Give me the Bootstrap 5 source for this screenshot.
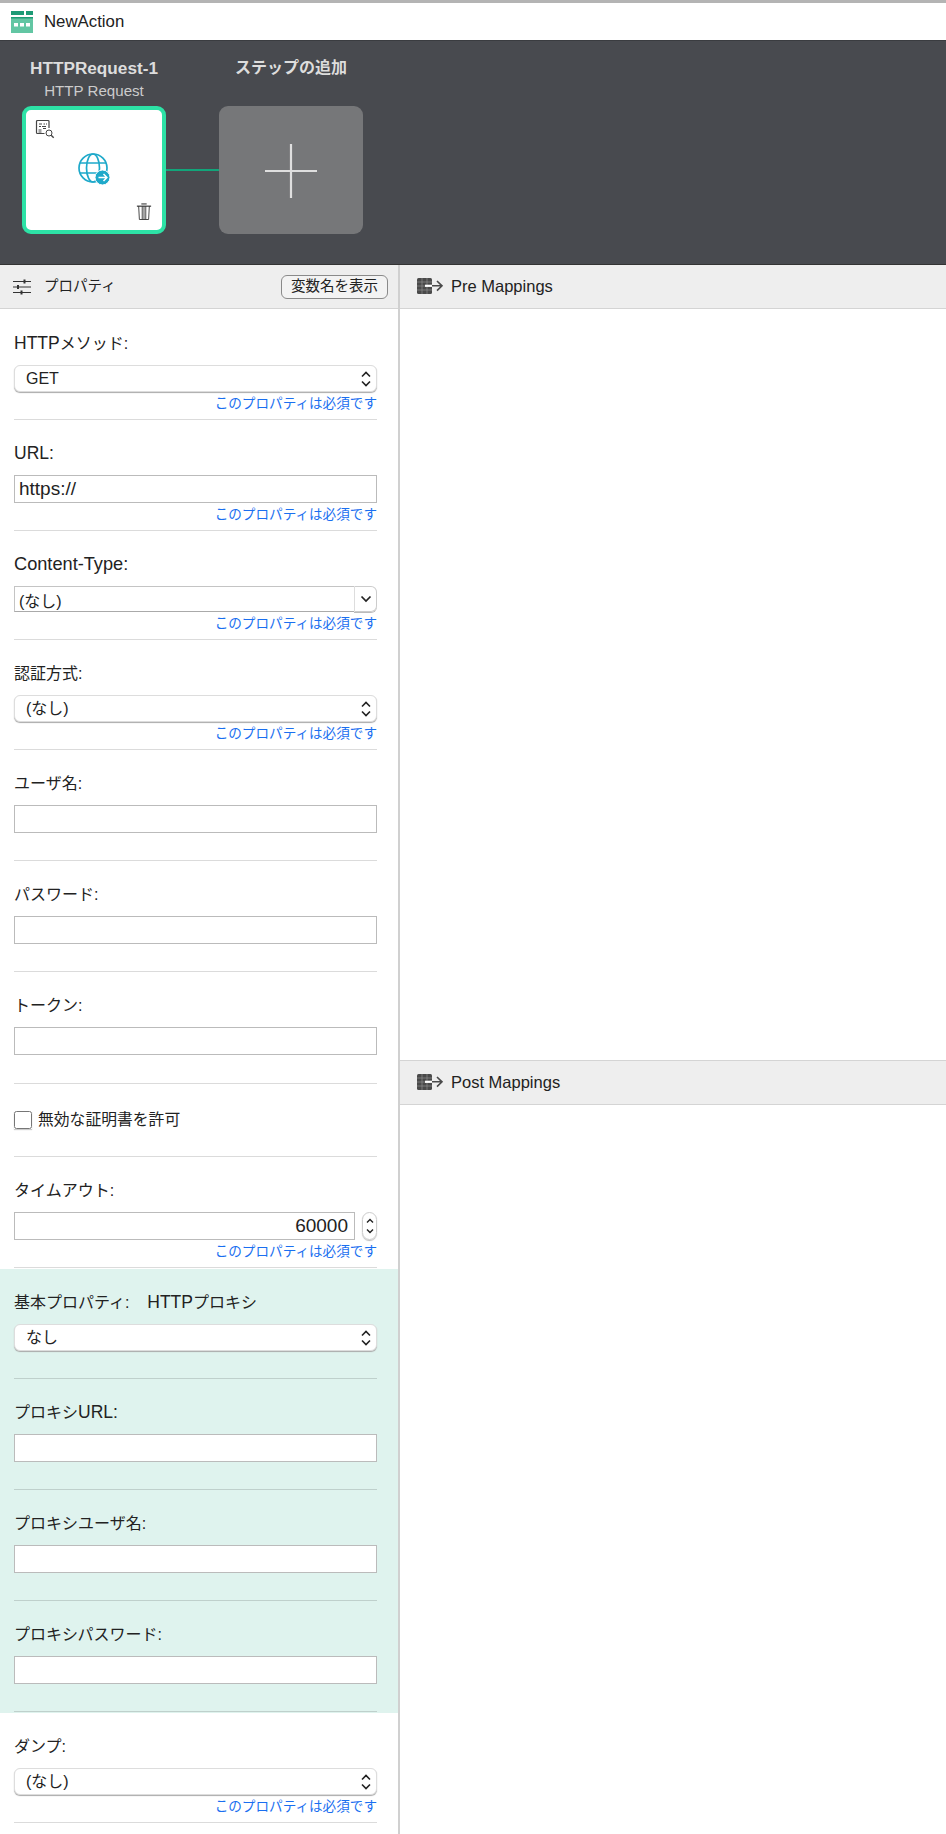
<!DOCTYPE html>
<html lang="ja">
<head>
<meta charset="utf-8">
<title>NewAction</title>
<link href="https://cdn.jsdelivr.net/npm/bootstrap@5.3.0/dist/css/bootstrap.min.css" rel="stylesheet">
<style>
html,body{height:1834px;overflow:hidden}
body{font-family:"Liberation Sans","Noto Sans CJK JP",sans-serif;font-size:16px;color:#222;background:#fff}
.topline{height:3px;background:#b4b4b4}
.titlebar{height:37px;padding-left:11px;gap:11px;font-size:16.8px}
.stage{height:225px;background:#484a4f;padding:0 0 0 22px;border-top:1px solid #3a3c40;border-bottom:1px solid #333}
.stepcol{width:144px}
.steptitle{height:65px;padding-top:16px;text-align:center;color:#ddd;line-height:1.2}
.steptitle b{display:block;font-size:17.2px;font-weight:700;line-height:22px}
.steptitle b.jp{font-size:16px}
.steptitle span{display:block;font-size:15.1px;color:#ccc;line-height:23px}
.stepcard{height:128px;border:4px solid #2de2a6;border-radius:9px;background:#fff;position:relative}
.stepadd{height:128px;border-radius:9px;background:#767779;padding-top:1px}
.link{width:53px;height:2px;background:#12a57a;margin-top:128px}
.ic-a{position:absolute;left:9px;top:9px}
.ic-b{position:absolute;left:52px;top:43px}
.ic-c{position:absolute;right:10px;bottom:9px}
.main{height:1569px}
.leftcol{width:400px;border-right:2px solid #d0d0d0;flex:none}
.panelhead{height:44px;background:#eee;border-bottom:1px solid #d4d4d4;font-size:14.5px}
.lefthead{padding:0 10px 0 13px}
.headgroup{gap:13px}
.righthead{padding:0 0 0 17px;gap:7px;font-size:16.5px}
.btn.varbtn{height:24px;padding:0 9px;font-size:14.5px;line-height:21px;color:#222;background:#f3f3f3;border:1px solid #8a8a8a;border-radius:6px}
.pf{margin:0 21px 0 14px;padding-top:22px;border-bottom:1px solid rgba(0,0,0,.14)}
.pf.firstpf{padding-top:23px}
.pf.extra{padding-bottom:1px}
.pf .flabel{display:block;height:24px;line-height:24px;margin-bottom:9px;font-size:16px;overflow:hidden}
.latin{font-size:17.5px;line-height:1}
.latinwide{font-size:18.2px;line-height:1}
.pf .form-select,.pf .form-control,.pf .combotxt{font-size:16px;color:#222;border-radius:0;box-shadow:none}
.pf .form-select{height:27px;padding:0 24px 0 11px;border:1px solid #ddd;border-radius:6px;background-color:#fff;box-shadow:0 1px 1px #aaa;background-size:12px 18px;background-position:right 4px center;background-image:url("data:image/svg+xml,%3Csvg xmlns='http://www.w3.org/2000/svg' viewBox='0 0 12 18'%3E%3Cpath d='M2 6.500 6 2.500l4 4M2 11.500l4 4 4-4' fill='none' stroke='%23222' stroke-width='1.600'/%3E%3C/svg%3E")}
.pf .form-control{height:28px;padding:0 6px 0 4px;font-size:19px;border:1px solid #bbb}
.pf .combotxt{height:26px;padding:0 4px;border:1px solid #c4c4c4;border-bottom-color:#aaa;border-right:0;line-height:30px;overflow:hidden;background:#fff;flex:1}
.combobtn{width:23px;height:26px;border:1px solid #ccc;border-left-color:#ddd;border-radius:0 6px 6px 0;box-shadow:0 1px 0 #bbb}
.hintrow{height:18px;margin-top:3px;margin-bottom:6px;font-size:13.6px;line-height:18px;text-align:right;color:#1a6ff0}
.spin{width:15px;height:28px;border:1px solid #ccc;border-radius:8px;box-shadow:0 1px 1px #bbb;margin-left:7px;flex:none}
.checkrow{height:73px;margin:0 21px 0 14px;gap:6px;font-size:15.8px;border-bottom:1px solid rgba(0,0,0,.14)}
.checkbox-x{width:18px;height:18px;margin:0;border:1px solid #c4c4c4;border-radius:4px;box-shadow:0 1px 1px #ccc}
.proxy{background:#dff3ee;margin-top:1px;padding-bottom:1px}
.mapbody{height:751px}
.posthead{border-top:1px solid #d4d4d4;height:45px}
</style>
</head>
<body>
<svg width="0" height="0" class="position-absolute">
<defs>
<symbol id="matrix" viewBox="0 0 27 17">
<rect x="0" y="0" width="15" height="16" rx="1.500" fill="#4a4a4a"/>
<path d="M5 0v16M10 0v16M0 4h15M0 8h15M0 12h15" stroke="#999" stroke-width=".6"/>
<rect x="8" y="6.700" width="7" height="2.200" fill="#fff"/>
<path d="M15 7.800h10M20 3l5 4.800-5 4.800" fill="none" stroke="#4a4a4a" stroke-width="1.600"/>
</symbol>
</defs>
</svg>
<div class="topline"></div>
<div class="titlebar d-flex align-items-center bg-white">
<svg width="22" height="22" viewBox="0 0 22 22"><rect x="0" y="0" width="13" height="4" fill="#1c9a75"/><rect x="15" y="0" width="7" height="4" fill="#1c9a75"/><rect x="0" y="6" width="22" height="16" fill="#62c6a3"/><rect x="0" y="6" width="22" height="1.500" fill="#1c9a75"/><rect x="3" y="12" width="4" height="3.500" fill="#fff"/><rect x="9" y="12" width="4" height="3.500" fill="#fff"/><rect x="15" y="12" width="4" height="3.500" fill="#fff"/></svg>
<span>NewAction</span>
</div>
<div class="stage d-flex align-items-start">
<div class="stepcol">
<div class="steptitle"><b>HTTPRequest-1</b><span>HTTP Request</span></div>
<div class="stepcard">
<svg class="ic-a" width="20" height="20" viewBox="0 0 20 20" fill="none" stroke="#444" stroke-width="1"><path d="M14 9V2.500a1 1 0 0 0-1-1H2.500a1 1 0 0 0-1 1v11a1 1 0 0 0 1 1H9.500" stroke-width="1.200"/><path d="M4 5h3M8.500 5h1.500M11 5h1M4 7.500h2M7 7.500h4M3.500 11h3M3.500 13h3M8 9.500h3"/><circle cx="14" cy="14" r="3"/><path d="M16.200 16.200l2.500 2.500" stroke-width="1.400"/></svg>
<svg class="ic-b" width="34" height="34" viewBox="0 0 34 34" fill="none" stroke="#1ea9ca" stroke-width="1.700"><circle cx="15" cy="15" r="14"/><ellipse cx="15" cy="15" rx="6.500" ry="14"/><path d="M2 10h26M2 20h26"/><circle cx="24.500" cy="24.500" r="7.500" fill="#1ea9ca" stroke="#fff" stroke-width="1"/><path d="M20.500 24.500h8M25.500 21l3.400 3.500-3.400 3.500" stroke="#fff" stroke-width="1.500"/></svg>
<svg class="ic-c" width="16" height="19" viewBox="0 0 18 20" fill="none" stroke="#333" stroke-width="1"><path d="M1 4h16" stroke-width="1.300"/><path d="M6 1.500h6" stroke-width="1.200"/><path d="M3 4l.8 15h10.400L15 4M7 4v15M9 4v15M11 4v15"/></svg>
</div>
</div>
<div class="link"></div>
<div class="stepcol">
<div class="steptitle"><b class="jp">ステップの追加</b></div>
<div class="stepadd d-flex align-items-center justify-content-center">
<svg width="52" height="54" viewBox="0 0 52 54"><path d="M26 0v54M0 27h52" stroke="#dfdfdf" stroke-width="2.200"/></svg>
</div>
</div>
</div>
<div class="main d-flex">
<div class="leftcol">
<div class="panelhead lefthead d-flex align-items-center justify-content-between">
<div class="d-flex align-items-center headgroup">
<svg width="18" height="16" viewBox="0 0 18 16" fill="none" stroke="#333" stroke-width="1.200"><path d="M0 2.500h18M0 8h18M0 13.500h18"/><path d="M11.500 .5v4M5 6v4M8.500 11.500v4" stroke-width="2"/></svg>
<span>プロパティ</span>
</div>
<button type="button" class="btn varbtn">変数名を表示</button>
</div>
<div class="pf firstpf"><div class="flabel"><span class="latin">HTTP</span>メソッド:</div><select class="form-select"><option>GET</option></select><div class="hintrow">このプロパティは必須です</div></div>
<div class="pf"><div class="flabel"><span class="latin">URL:</span></div><input class="form-control" value="https://"><div class="hintrow">このプロパティは必須です</div></div>
<div class="pf"><div class="flabel"><span class="latinwide">Content-Type:</span></div><div class="d-flex"><div class="combotxt">(なし)</div><div class="combobtn d-flex align-items-center justify-content-center"><svg width="12" height="8" viewBox="0 0 12 8"><path d="M1.500 1.500 6 6l4.500-4.500" fill="none" stroke="#222" stroke-width="1.700"/></svg></div></div><div class="hintrow">このプロパティは必須です</div></div>
<div class="pf"><div class="flabel">認証方式:</div><select class="form-select"><option>(なし)</option></select><div class="hintrow">このプロパティは必須です</div></div>
<div class="pf"><div class="flabel">ユーザ名:</div><input class="form-control"><div class="hintrow"></div></div>
<div class="pf"><div class="flabel">パスワード:</div><input class="form-control"><div class="hintrow"></div></div>
<div class="pf extra"><div class="flabel">トークン:</div><input class="form-control"><div class="hintrow"></div></div>
<div class="checkrow d-flex align-items-center"><input type="checkbox" class="checkbox-x"><span>無効な証明書を許可</span></div>
<div class="pf"><div class="flabel">タイムアウト:</div><div class="d-flex"><input class="form-control text-end" value="60000"><div class="spin d-flex align-items-center justify-content-center"><svg width="10" height="20" viewBox="0 0 10 20"><path d="M2 6.500 5 3.500l3 3M2 13.500l3 3 3-3" fill="none" stroke="#222" stroke-width="1.400"/></svg></div></div><div class="hintrow">このプロパティは必須です</div></div>
<div class="proxy">
<div class="pf"><div class="flabel">基本プロパティ:&nbsp;&nbsp;&nbsp;&nbsp;<span class="latin">HTTP</span>プロキシ</div><select class="form-select"><option>なし</option></select><div class="hintrow"></div></div>
<div class="pf"><div class="flabel">プロキシ<span class="latin">URL:</span></div><input class="form-control"><div class="hintrow"></div></div>
<div class="pf"><div class="flabel">プロキシユーザ名:</div><input class="form-control"><div class="hintrow"></div></div>
<div class="pf"><div class="flabel">プロキシパスワード:</div><input class="form-control"><div class="hintrow"></div></div>
</div>
<div class="pf"><div class="flabel">ダンプ:</div><select class="form-select"><option>(なし)</option></select><div class="hintrow">このプロパティは必須です</div></div>
</div>
<div class="flex-grow-1">
<div class="panelhead righthead d-flex align-items-center"><svg width="27" height="17"><use href="#matrix"/></svg><span>Pre Mappings</span></div>
<div class="mapbody"></div>
<div class="panelhead posthead righthead d-flex align-items-center"><svg width="27" height="17"><use href="#matrix"/></svg><span>Post Mappings</span></div>
</div>
</div>
<script src="https://cdn.jsdelivr.net/npm/bootstrap@5.3.0/dist/js/bootstrap.bundle.min.js"></script>
</body>
</html>
